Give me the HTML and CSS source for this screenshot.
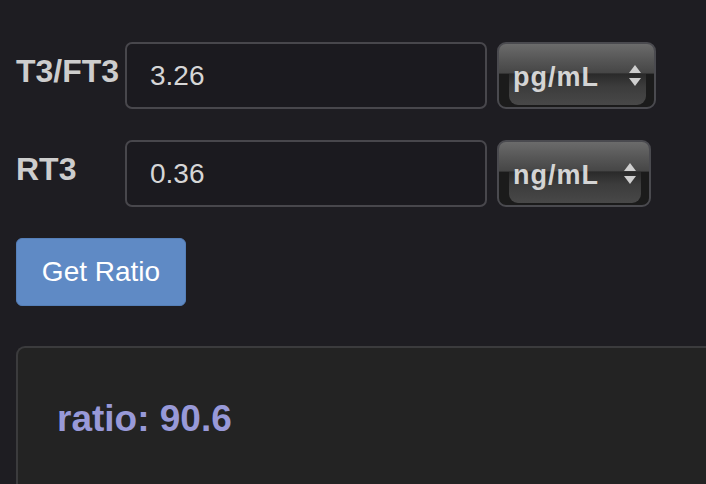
FILE: index.html
```html
<!DOCTYPE html>
<html lang="en">

<head>
  <meta charset="UTF-8" />
  <meta name="viewport" content="width=device-width, initial-scale=1.0" />
  <title>RT3 Ratio</title>
  <link rel="stylesheet" href="styles.css">
</head>

<body>
  <form class="calc">
    <!-- T3 / FT3 -->
    <div class="linha">
      <label class="rotulo" for="t3">T3/FT3</label>
      <input class="campo" type="text" id="t3" value="3.26" />
      <div class="unidade unidadeLarga">
        <span class="unidadeTexto">pg/mL</span>
        <svg class="setas" width="14" height="22" viewBox="0 0 14 22">
          <path d="M7 0 L13 8 L1 8 Z" fill="#cfcfcf" />
          <path d="M1 13 L13 13 L7 21 Z" fill="#cfcfcf" />
        </svg>
      </div>
    </div>

    <!-- RT3 -->
    <div class="linha">
      <label class="rotulo" for="rt3">RT3</label>
      <input class="campo" type="text" id="rt3" value="0.36" />
      <div class="unidade">
        <span class="unidadeTexto">ng/mL</span>
        <svg class="setas" width="14" height="22" viewBox="0 0 14 22">
          <path d="M7 0 L13 8 L1 8 Z" fill="#cfcfcf" />
          <path d="M1 13 L13 13 L7 21 Z" fill="#cfcfcf" />
        </svg>
      </div>
    </div>

    <button class="botaoRatio" type="button">Get Ratio</button>
  </form>

  <div class="resultado">
    <p class="ratio">ratio: 90.6</p>
  </div>
</body>

</html>
```

FILE: styles.css
```css
html,
body {
  height: 100%;
  overflow: hidden;
}

body {
  box-sizing: border-box;
  display: flex;
  flex-direction: column;
  margin: 0;
  padding: 42px 0 0 16px;
  background-color: #1e1d22;
  font-family: "Liberation Sans", Arial, sans-serif;
}

.calc {
  margin: 0;
}

.linha {
  display: flex;
  align-items: flex-start;
  margin-bottom: 31px;
}

.rotulo {
  width: 109px;
  margin-top: 11px;
  font-size: 32px;
  line-height: 36px;
  font-weight: bold;
  color: #cdcdcd;
}

.campo {
  box-sizing: border-box;
  width: 362px;
  height: 67px;
  margin: 0;
  padding: 0 0 0 23px;
  border: 2px solid #48474c;
  border-radius: 7px;
  background-color: #1b1a1f;
  color: #d6d6d6;
  font-family: "Liberation Sans", Arial, sans-serif;
  font-size: 28px;
  outline: none;
}

.unidade {
  position: relative;
  box-sizing: border-box;
  display: flex;
  align-items: center;
  width: 154px;
  height: 67px;
  margin-left: 10px;
  padding: 0 12px 0 14px;
  border: 2px solid #4a4a4f;
  border-radius: 9px;
  overflow: hidden;
  background: linear-gradient(to bottom, #6b6b6b 0%, #565656 25%, #464646 46%, #1b1b1b 48%, #1b1b1b 100%);
}

.unidadeLarga {
  width: 159px;
}

.unidade::before {
  content: "";
  position: absolute;
  left: 10px;
  right: 8px;
  top: 48%;
  bottom: 2px;
  border-radius: 0 0 9px 9px;
  background: linear-gradient(to bottom, #2a2a2a 0%, #3c3c3c 40%, #484848 100%);
}

.unidadeTexto {
  position: relative;
  flex: 1;
  padding-top: 4px;
  font-size: 27px;
  font-weight: bold;
  letter-spacing: 1px;
  color: #d4d4d4;
}

.setas {
  position: relative;
  display: block;
}

.botaoRatio {
  box-sizing: border-box;
  display: block;
  width: 170px;
  height: 68px;
  margin: 0;
  padding: 0;
  border: 1px solid #557fb8;
  border-radius: 6px;
  background-color: #5f8ac5;
  color: #ffffff;
  font-family: "Liberation Sans", Arial, sans-serif;
  font-size: 28px;
}

.resultado {
  box-sizing: border-box;
  flex: 1;
  margin-top: 40px;
  padding: 51px 0 0 39px;
  border: 2px solid #3b3b3d;
  border-right: none;
  border-bottom: none;
  border-radius: 9px 0 0 0;
  background-color: #232323;
}

.ratio {
  margin: 0;
  font-size: 37px;
  line-height: 1.1;
  font-weight: bold;
  color: #9899d8;
}
```
